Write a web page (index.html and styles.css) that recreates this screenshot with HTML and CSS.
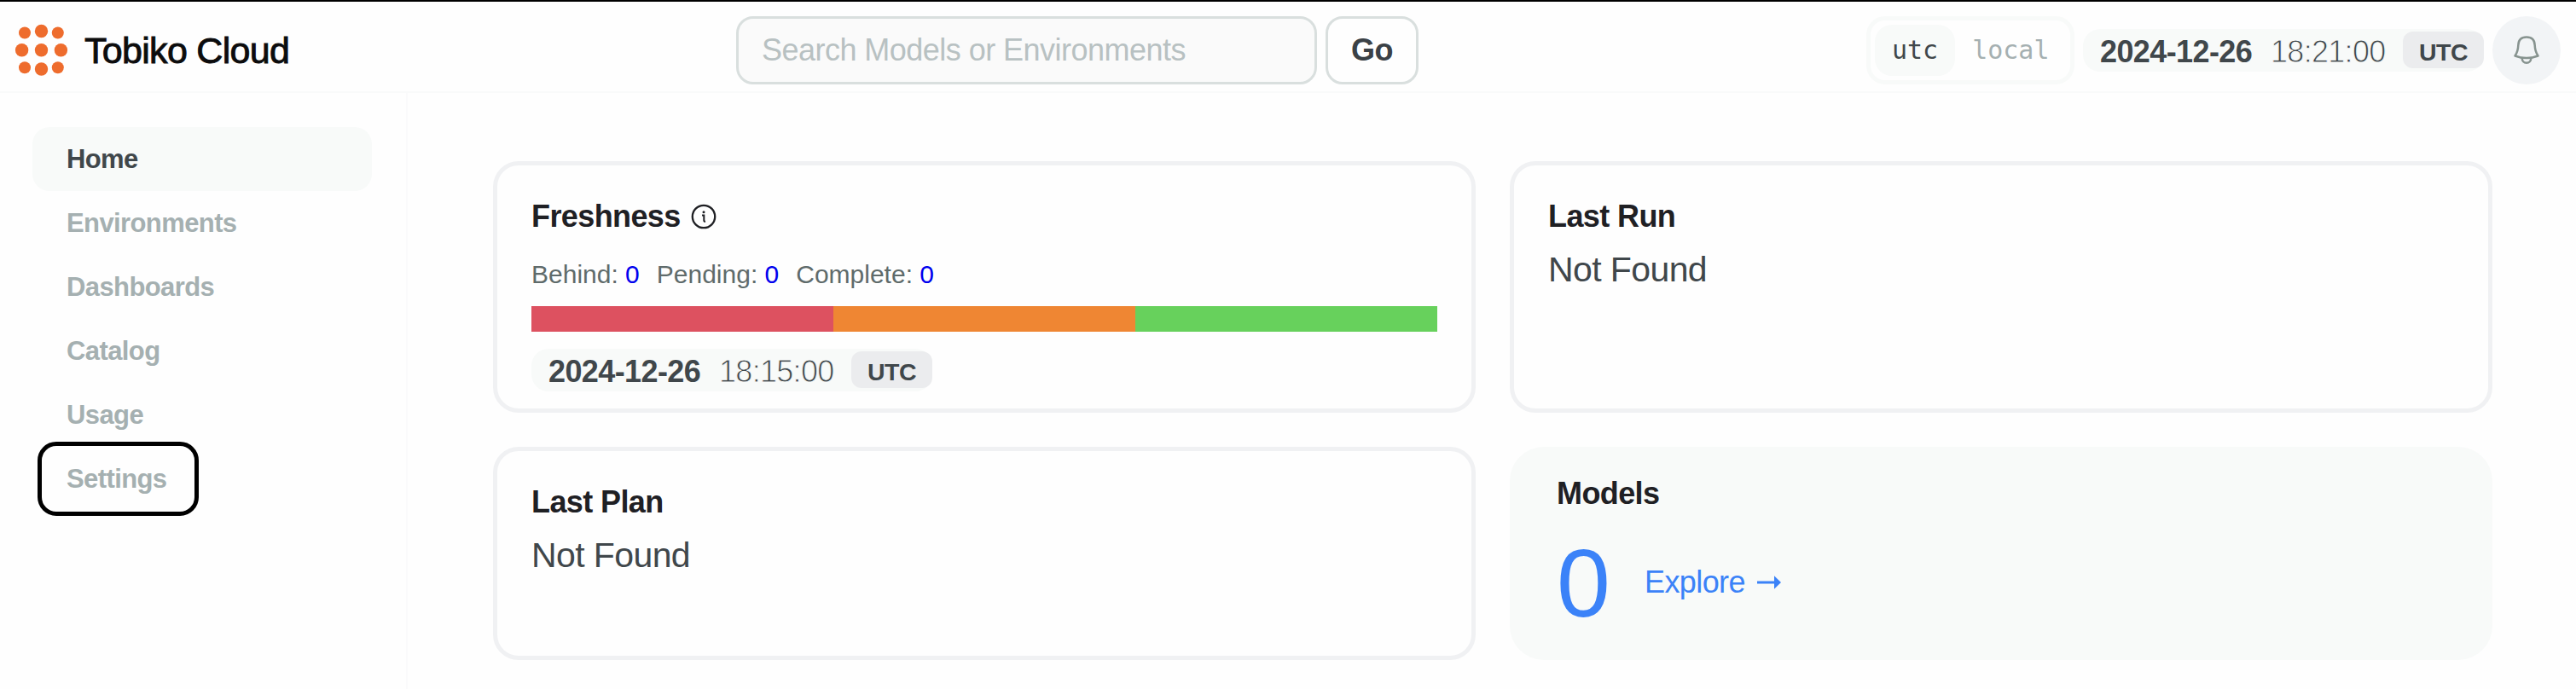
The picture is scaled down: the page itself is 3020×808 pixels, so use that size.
FILE: index.html
```html
<!DOCTYPE html>
<html lang="en">
<head>
<meta charset="utf-8">
<title>Tobiko Cloud</title>
<link rel="stylesheet" href="styles.css">
</head>
<body>
<header class="header">
  <div class="brand">
    <svg class="brand-logo" width="64" height="64" viewBox="0 0 64 64" fill="#ee6c2d">
      <circle cx="12" cy="11.5" r="7"/><circle cx="31.5" cy="9.5" r="7.7"/><circle cx="50.8" cy="11.5" r="7"/>
      <circle cx="8.6" cy="31.8" r="7.7"/><circle cx="31.5" cy="31.8" r="7.7"/><circle cx="54.4" cy="31.8" r="7.7"/>
      <circle cx="12" cy="52.3" r="7"/><circle cx="31.5" cy="54" r="7.7"/><circle cx="50.8" cy="52.3" r="7"/>
    </svg>
    <span class="brand-name">Tobiko Cloud</span>
  </div>
  <form class="search">
    <input class="search-input" type="text" placeholder="Search Models or Environments">
    <button class="search-button" type="button">Go</button>
  </form>
  <div class="tools">
    <div class="zone-switch">
      <span class="zone zone-active">utc</span>
      <span class="zone">local</span>
    </div>
    <div class="stamp">
      <span class="stamp-date">2024-12-26</span>
      <span class="stamp-time">18:21:00</span>
      <span class="stamp-zone">UTC</span>
    </div>
    <div class="bell">
      <svg width="36" height="40" viewBox="0 0 36 40" fill="none" stroke="#87938f" stroke-width="2.5" stroke-linejoin="round" stroke-linecap="round">
        <path d="M18 4.500C12 4.500 8.500 8 8.300 14C8.100 20 7.300 22.500 4.500 26.500C13 29.800 23 29.800 31.500 26.500C28.700 22.500 27.900 20 27.700 14C27.500 8 24 4.500 18 4.500Z"/>
        <path d="M12.700 29C12.700 32.500 15 34.800 18 34.800S23.300 32.500 23.300 29"/>
      </svg>
    </div>
  </div>
</header>
<div class="layout">
  <nav class="sidebar">
    <a class="nav-item nav-active">Home</a>
    <a class="nav-item">Environments</a>
    <a class="nav-item">Dashboards</a>
    <a class="nav-item">Catalog</a>
    <a class="nav-item">Usage</a>
    <a class="nav-item nav-marked">Settings</a>
  </nav>
  <main class="cards">
    <section class="card">
      <h2 class="card-title">Freshness
        <svg class="info" width="30" height="30" viewBox="0 0 30 30" fill="none" stroke="#1f2024">
          <circle cx="15" cy="15" r="13.200" stroke-width="2.300"/>
          <circle cx="15" cy="9.800" r="1.500" fill="#1f2024" stroke="none"/>
          <path d="M13 13.500H15.300V19.500C15.300 20.600 16 20.800 17 20.600" stroke-width="2"/>
        </svg>
      </h2>
      <div class="counts">
        <span>Behind: <b class="count">0</b></span>
        <span>Pending: <b class="count">0</b></span>
        <span>Complete: <b class="count">0</b></span>
      </div>
      <div class="bar">
        <div class="bar-behind"></div>
        <div class="bar-pending"></div>
        <div class="bar-complete"></div>
      </div>
      <div class="stamp">
        <span class="stamp-date">2024-12-26</span>
        <span class="stamp-time">18:15:00</span>
        <span class="stamp-zone">UTC</span>
      </div>
    </section>
    <section class="card">
      <h2 class="card-title">Last Run</h2>
      <p class="card-text">Not Found</p>
    </section>
    <section class="card">
      <h2 class="card-title">Last Plan</h2>
      <p class="card-text">Not Found</p>
    </section>
    <section class="card card-filled">
      <h2 class="card-title">Models</h2>
      <div class="models">
        <span class="models-count">0</span>
        <a class="explore">Explore
          <svg width="30" height="18" viewBox="0 0 30 18" fill="#3b82f8">
            <path d="M1 7.500H21V1.200L29 9L21 16.800V10.500H1Z"/>
          </svg>
        </a>
      </div>
    </section>
  </main>
</div>
</body>
</html>
```

FILE: styles.css
```css
*, *::after { box-sizing: border-box; }

body {
  margin: 0;
  height: 808px;
  overflow: hidden;
  display: flex;
  flex-direction: column;
  border-top: 2px solid #000;
  background: #fefefe;
  color: #40474b;
  font-family: "Liberation Sans", Arial, sans-serif;
}

.header {
  display: grid;
  grid-template-columns: 846px 1fr auto;
  height: 107px;
  padding: 17px 18px 8px 17px;
  border-bottom: 2px solid #f9fafa;
}

.brand { display: flex; align-items: center; gap: 18px; }
.brand-name {
  color: #0c0c0d;
  font-size: 43px;
  line-height: 50px;
  letter-spacing: -0.7px;
  -webkit-text-stroke: 0.9px #0c0c0d;
}

.search { display: flex; gap: 10px; }
.search-input {
  width: 681px;
  height: 80px;
  padding: 0 27px;
  border: 3px solid #d9dfde;
  border-radius: 20px;
  background: #fafafa;
  font: 36px/40px "Liberation Sans", Arial, sans-serif;
  letter-spacing: -0.53px;
}
.search-input::placeholder { color: #b8c1c2; opacity: 1; }
.search-button {
  width: 109px;
  height: 80px;
  padding: 0;
  border: 3px solid #d9dfde;
  border-radius: 20px;
  background: #fefefe;
  color: #3b4146;
  font: bold 36px/40px "Liberation Sans", Arial, sans-serif;
  letter-spacing: -0.5px;
}

.tools { display: flex; align-items: center; gap: 10px; }
.zone-switch {
  display: flex;
  width: 244px;
  height: 80px;
  padding: 5px;
  border: 5px solid #f8faf9;
  border-radius: 22px;
  font: 30px/60px "DejaVu Sans Mono", monospace;
}
.zone { padding: 0 20px; color: #a5b0b1; }
.zone-active { border-radius: 20px; background: #f8faf9; color: #40474b; }

.stamp {
  display: flex;
  align-items: center;
  width: 470px;
  height: 50px;
  padding-left: 20px;
  border-radius: 20px;
  background: #f8faf9;
  font-size: 36px;
  letter-spacing: -0.6px;
}
.stamp-date { width: 200px; padding-top: 3px; font-weight: bold; }
.stamp-time { width: 155px; padding-top: 3px; letter-spacing: -0.7px; -webkit-text-stroke: 0.9px #f8faf9; }
.stamp-zone {
  width: 95px;
  height: 43px;
  margin-bottom: 1px;
  padding-top: 4px;
  border-radius: 12px;
  background: #ebecee;
  font-size: 28.500px;
  line-height: 41px;
  font-weight: bold;
  text-align: center;
}

.bell {
  display: flex;
  align-items: center;
  justify-content: center;
  width: 80px;
  height: 80px;
  border-radius: 50%;
  background: #f2f4f6;
}

.layout { display: flex; flex: 1; }
.sidebar {
  width: 478px;
  padding: 40px 40px 0 38px;
  border-right: 2px solid #fafafb;
}
.nav-item {
  position: relative;
  display: block;
  height: 75px;
  padding-left: 40px;
  border-radius: 20px;
  color: #a5b0b1;
  font-size: 31px;
  line-height: 75px;
  font-weight: bold;
  letter-spacing: -0.6px;
}
.nav-active { background: #f8faf9; color: #40474b; }
.nav-marked::after {
  content: "";
  position: absolute;
  left: 6px;
  top: -6px;
  width: 189px;
  height: 87px;
  border: 5px solid #000;
  border-radius: 22px;
}

.cards {
  flex: 1;
  display: grid;
  grid-template-columns: 1152px 1152px;
  grid-template-rows: 295px 250px;
  gap: 40px;
  padding: 80px 98px 0 100px;
}
.card {
  padding: 40px 40px 20px;
  border: 5px solid #f0f1f3;
  border-radius: 30px;
}
.card-title {
  display: flex;
  align-items: center;
  gap: 12px;
  margin: 0;
  color: #1f2024;
  font-size: 36px;
  line-height: 39px;
  letter-spacing: -0.6px;
}
.card-text { margin: 20px 0 0; font-size: 41px; line-height: 47px; letter-spacing: -0.6px; }

.counts {
  display: flex;
  gap: 20px;
  margin-top: 30px;
  color: #5f6b6b;
  font-size: 30px;
  line-height: 37px;
}
.count { color: #0000ee; font-weight: normal; }
.bar { display: grid; grid-template-columns: repeat(3, 1fr); height: 30px; margin: 19px 0 20px; }
.bar-behind { background: #dd5160; }
.bar-pending { background: #ef8633; }
.bar-complete { background: #67d15c; }

.card-filled { padding: 35px 55px; border: 0; border-radius: 40px; background: #f8faf9; }
.models { display: flex; align-items: center; margin-top: 26px; color: #3b82f8; }
.models-count { width: 103px; font-size: 113px; line-height: 120px; }
.explore {
  display: flex;
  align-items: center;
  gap: 13px;
  margin-bottom: 2px;
  font-size: 36px;
  line-height: 40px;
  letter-spacing: -0.6px;
}
```
